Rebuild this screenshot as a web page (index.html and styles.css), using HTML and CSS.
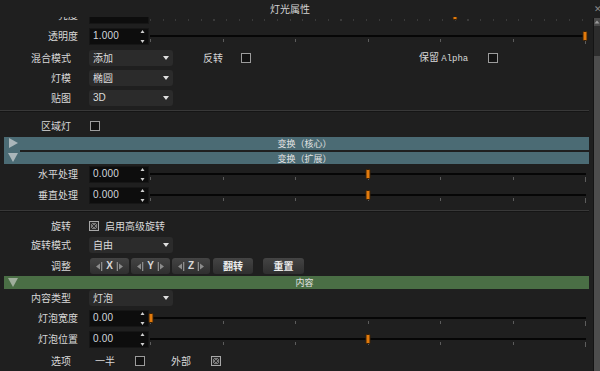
FILE: index.html
```html
<!DOCTYPE html>
<html lang="zh">
<head>
<meta charset="utf-8">
<title>灯光属性</title>
<link rel="stylesheet" href="styles.css">
</head>
<body>
<div class="win">
  <div class="titlebar">
    <span class="title">灯光属性</span>
    <span class="close">✕</span>
  </div>
  <div class="body">
    <div class="viewport">
      <div class="content">

        <div class="row">
          <span class="lbl s">亮度</span>
          <div class="num"><span class="val"></span></div>
          <div class="slider">
            <div class="track"></div>
            <div class="ticks fine"></div>
            <div class="thumb" style="left:69.5%"></div>
          </div>
        </div>

        <div class="row mt1">
          <span class="lbl s">透明度</span>
          <div class="num"><span class="val">1.000</span>
            <svg class="spin" width="5" height="17" viewBox="0 0 5 17"><polygon points="2.5,2 4.5,5 0.5,5" fill="#d0d0d0"/><polygon points="0.5,12 4.5,12 2.5,15" fill="#d0d0d0"/></svg>
          </div>
          <div class="slider">
            <div class="track"></div>
            <div class="ticks"><i></i><i></i><i></i><i></i><i></i><i></i><i class="end"></i></div>
            <div class="thumb" style="left:99.1%"></div>
          </div>
        </div>

        <div class="row mt2">
          <span class="lbl">混合模式</span>
          <div class="dd"><span>添加</span><svg width="6" height="4" viewBox="0 0 6 4"><polygon points="0,0 6,0 3,4" fill="#e0e0e0"/></svg></div>
          <span class="opt rev">反转</span>
          <span class="cb cb-rev"></span>
          <span class="opt keep">保留 <span class="mono">Alpha</span></span>
          <span class="cb cb-keep"></span>
        </div>

        <div class="row">
          <span class="lbl">灯模</span>
          <div class="dd"><span>椭圆</span><svg width="6" height="4" viewBox="0 0 6 4"><polygon points="0,0 6,0 3,4" fill="#e0e0e0"/></svg></div>
        </div>

        <div class="row">
          <span class="lbl">贴图</span>
          <div class="dd"><span class="latin">3D</span><svg width="6" height="4" viewBox="0 0 6 4"><polygon points="0,0 6,0 3,4" fill="#e0e0e0"/></svg></div>
        </div>

        <div class="sep mt2"></div>

        <div class="row mt4">
          <span class="lbl">区域灯</span>
          <span class="cb cb-area"></span>
        </div>

        <div class="bars teal mt1">
          <div class="handle">
            <svg width="10" height="10" viewBox="0 0 10 10"><polygon points="1,0 10,5 1,10" fill="#aab6ba"/></svg>
            <svg class="h2" width="10" height="9" viewBox="0 0 10 9"><polygon points="0,0 10,0 5,9" fill="#aab6ba"/></svg>
          </div>
          <div class="bar-col">
            <div class="bar b1">变换（核心）</div>
            <div class="bar-gap"></div>
            <div class="bar b2">变换（扩展）</div>
          </div>
        </div>

        <div class="row">
          <span class="lbl s">水平处理</span>
          <div class="num"><span class="val">0.000</span>
            <svg class="spin" width="5" height="17" viewBox="0 0 5 17"><polygon points="2.5,2 4.5,5 0.5,5" fill="#d0d0d0"/><polygon points="0.5,12 4.5,12 2.5,15" fill="#d0d0d0"/></svg>
          </div>
          <div class="slider">
            <div class="track"></div>
            <div class="ticks"><i></i><i></i><i></i><i></i><i></i><i></i><i class="end"></i></div>
            <div class="thumb" style="left:49.7%"></div>
          </div>
        </div>

        <div class="row mt1">
          <span class="lbl s">垂直处理</span>
          <div class="num"><span class="val">0.000</span>
            <svg class="spin" width="5" height="17" viewBox="0 0 5 17"><polygon points="2.5,2 4.5,5 0.5,5" fill="#d0d0d0"/><polygon points="0.5,12 4.5,12 2.5,15" fill="#d0d0d0"/></svg>
          </div>
          <div class="slider">
            <div class="track"></div>
            <div class="ticks"><i></i><i></i><i></i><i></i><i></i><i></i><i class="end"></i></div>
            <div class="thumb" style="left:49.7%"></div>
          </div>
        </div>

        <div class="sep mt5"></div>

        <div class="row short mt5">
          <span class="lbl">旋转</span>
          <svg class="cbx cbx-rot" width="10" height="10" viewBox="0 0 10 10"><rect x="0.5" y="0.5" width="9" height="9" fill="#2a2a2a" stroke="#a8a8a8"/><rect x="2" y="2" width="6" height="6" fill="#7a7a7a"/><path d="M2 2 L8 8 M8 2 L2 8" stroke="#2a2a2a" stroke-width="1"/></svg>
          <span class="opt adv">启用高级旋转</span>
        </div>

        <div class="row">
          <span class="lbl">旋转模式</span>
          <div class="dd"><span>自由</span><svg width="6" height="4" viewBox="0 0 6 4"><polygon points="0,0 6,0 3,4" fill="#e0e0e0"/></svg></div>
        </div>

        <div class="row mt1">
          <span class="lbl">调整</span>
          <div class="btns">
            <div class="btn axis">
              <svg width="8" height="9" viewBox="0 0 8 9"><polygon points="0,4.5 4,1.5 4,7.5" fill="#8c8c8c"/><rect x="5" y="0" width="1.3" height="9" fill="#8c8c8c"/></svg>
              <span class="ax">X</span>
              <svg width="8" height="9" viewBox="0 0 8 9"><rect x="1.7" y="0" width="1.3" height="9" fill="#8c8c8c"/><polygon points="8,4.5 4,1.5 4,7.5" fill="#8c8c8c"/></svg>
            </div>
            <div class="btn axis">
              <svg width="8" height="9" viewBox="0 0 8 9"><polygon points="0,4.5 4,1.5 4,7.5" fill="#8c8c8c"/><rect x="5" y="0" width="1.3" height="9" fill="#8c8c8c"/></svg>
              <span class="ax">Y</span>
              <svg width="8" height="9" viewBox="0 0 8 9"><rect x="1.7" y="0" width="1.3" height="9" fill="#8c8c8c"/><polygon points="8,4.5 4,1.5 4,7.5" fill="#8c8c8c"/></svg>
            </div>
            <div class="btn axis z">
              <svg width="8" height="9" viewBox="0 0 8 9"><polygon points="0,4.5 4,1.5 4,7.5" fill="#8c8c8c"/><rect x="5" y="0" width="1.3" height="9" fill="#8c8c8c"/></svg>
              <span class="ax">Z</span>
              <svg width="8" height="9" viewBox="0 0 8 9"><rect x="1.7" y="0" width="1.3" height="9" fill="#8c8c8c"/><polygon points="8,4.5 4,1.5 4,7.5" fill="#8c8c8c"/></svg>
            </div>
            <div class="btn flip">翻转</div>
            <div class="btn reset">重置</div>
          </div>
        </div>

        <div class="bars green">
          <div class="handle">
            <svg width="10" height="9" viewBox="0 0 10 9"><polygon points="0,0 10,0 5,9" fill="#9fae9c"/></svg>
          </div>
          <div class="bar-col">
            <div class="bar b1">内容</div>
          </div>
        </div>

        <div class="row short">
          <span class="lbl">内容类型</span>
          <div class="dd"><span>灯泡</span><svg width="6" height="4" viewBox="0 0 6 4"><polygon points="0,0 6,0 3,4" fill="#e0e0e0"/></svg></div>
        </div>

        <div class="row mt1">
          <span class="lbl s">灯泡宽度</span>
          <div class="num"><span class="val">0.00</span>
            <svg class="spin" width="5" height="17" viewBox="0 0 5 17"><polygon points="2.5,2 4.5,5 0.5,5" fill="#d0d0d0"/><polygon points="0.5,12 4.5,12 2.5,15" fill="#d0d0d0"/></svg>
          </div>
          <div class="slider">
            <div class="track"></div>
            <div class="ticks"><i></i><i></i><i></i><i></i><i></i><i></i><i class="end"></i></div>
            <div class="thumb" style="left:0.3%"></div>
          </div>
        </div>

        <div class="row mt1">
          <span class="lbl s">灯泡位置</span>
          <div class="num"><span class="val">0.00</span>
            <svg class="spin" width="5" height="17" viewBox="0 0 5 17"><polygon points="2.5,2 4.5,5 0.5,5" fill="#d0d0d0"/><polygon points="0.5,12 4.5,12 2.5,15" fill="#d0d0d0"/></svg>
          </div>
          <div class="slider">
            <div class="track"></div>
            <div class="ticks"><i></i><i></i><i></i><i></i><i></i><i></i><i class="end"></i></div>
            <div class="thumb" style="left:49.7%"></div>
          </div>
        </div>

        <div class="row mt2">
          <span class="lbl">选项</span>
          <span class="opt half">一半</span>
          <span class="cb cb-half"></span>
          <span class="opt ext">外部</span>
          <svg class="cbx cbx-ext" width="10" height="10" viewBox="0 0 10 10"><rect x="0.5" y="0.5" width="9" height="9" fill="#2a2a2a" stroke="#a8a8a8"/><rect x="2" y="2" width="6" height="6" fill="#7a7a7a"/><path d="M2 2 L8 8 M8 2 L2 8" stroke="#2a2a2a" stroke-width="1"/></svg>
        </div>

      </div>
    </div>
    <div class="scrollbar">
      <div class="sb-up"><svg width="6" height="8" viewBox="0 0 6 8"><polygon points="3,2.5 5.5,5.5 0.5,5.5" fill="#9a9a9a"/></svg></div>
      <div class="sb-track"></div>
      <div class="sb-thumb"></div>
    </div>
  </div>
</div>
</body>
</html>
```

FILE: styles.css
```css
* { box-sizing: border-box; }
html, body { margin: 0; padding: 0; background: #1f1f1f; }
body {
  width: 600px; height: 371px; overflow: hidden;
  font-family: "Noto Sans CJK SC", "Noto Sans", sans-serif;
  font-size: 10px; line-height: 12px; color: #d6d6d6;
}
.win { width: 600px; height: 371px; display: flex; flex-direction: column; background: #1f1f1f; }

.titlebar { height: 17px; flex: none; display: flex; align-items: center; }
.title { flex: 1; text-align: center; padding-right: 14px; color: #d4d4d4; font-size: 10px; padding-top: 1px; }
.close { width: 6px; overflow: hidden; color: #8a8a8a; font-size: 9px; white-space: nowrap; font-family: "DejaVu Sans", sans-serif; }

.body { flex: 1; display: flex; min-height: 0; }
.viewport { flex: 1; overflow: hidden; }
.content { margin-top: -12px; padding: 0 4px; }

.scrollbar { width: 7px; flex: none; margin-top: 1px; border-left: 1px solid #141414; background: #2d2d2d; display: flex; flex-direction: column; }
.sb-up { height: 8px; background: #4a4a4a; display: flex; justify-content: center; }
.sb-track { height: 30px; }
.sb-thumb { flex: 1; background: #4d4d4d; }

.row { display: flex; align-items: center; height: 20px; }
.row.short { height: 18px; }
.mt1 { margin-top: 1px; }
.mt2 { margin-top: 2px; }
.mt4 { margin-top: 4px; }
.mt5 { margin-top: 5px; }

.sep { height: 2px; margin-left: -4px; border-top: 1px solid #383838; background: #151515; }

.lbl { width: 85px; flex: none; text-align: right; padding-right: 18px; white-space: nowrap; color: #d8d8d8; }
.lbl.s { padding-right: 11px; }

.num { width: 60px; height: 17px; flex: none; background: #0d0d0d; border: 1px solid #161616; display: flex; align-items: center; justify-content: space-between; padding: 0 3px 0 3px; }
.val { font-family: "Liberation Sans", sans-serif; font-size: 10px; color: #d2d6dc; letter-spacing: 0.2px; }
.spin { display: block; }

.slider { flex: 1; position: relative; height: 20px; margin-left: 1px; padding-right: 3px; display: flex; flex-direction: column; justify-content: center; }
.track { height: 2px; background: #060606; }
.ticks { display: flex; justify-content: space-between; height: 3px; margin-top: 2px; margin-bottom: -5px; }
.ticks i { width: 1px; background: #5c5c5c; }
.ticks i.end { height: 5px; }
.ticks.fine { background: repeating-linear-gradient(90deg, #3a3a3a 0 1px, transparent 1px 12.7px); height: 2px; }
.thumb { position: absolute; top: 50%; width: 5px; height: 10px; transform: translate(-50%, -50%); background: #e27a0c; border: 1px solid #3a2208; border-radius: 1px; }

.dd { width: 84px; height: 16px; flex: none; background: #2b2b2b; border-radius: 3px; display: flex; align-items: center; justify-content: space-between; padding: 0 4px 0 4px; color: #dcdcdc; }
.dd svg { display: block; }
.latin { font-family: "Liberation Sans", sans-serif; }

.cb { width: 10px; height: 10px; flex: none; border: 1px solid #9c9c9c; background: #121212; }
.cbx { display: block; flex: none; }

.opt { white-space: nowrap; color: #d8d8d8; }
.rev { margin-left: 30px; }
.cb-rev { margin-left: 18px; }
.keep { margin-left: 168px; }
.mono { font-family: "Liberation Mono", monospace; font-size: 9px; }
.cb-keep { margin-left: 20px; }
.cb-area { margin-left: 1px; }
.adv { margin-left: 6px; }
.half { margin-left: 6px; }
.cb-half { margin-left: 20px; }
.ext { margin-left: 26px; }
.cbx-ext { margin-left: 20px; }

.bars { display: flex; color: #e2e2e2; font-size: 9px; line-height: 11px; }
.bars .handle { width: 16px; flex: none; display: flex; flex-direction: column; align-items: center; padding-top: 1px; padding-left: 2px; }
.bars.teal .handle { background: #4b6b74; }
.bars.green .handle { background: #4a6e45; padding-top: 2px; }
.handle .h2 { margin-top: 5px; }
.bar-col { flex: 1; display: flex; flex-direction: column; }
.bar { display: flex; align-items: center; justify-content: center; }
.teal .bar { background: #4b6b74; }
.teal .b1 { height: 13px; }
.teal .b2 { height: 12px; }
.bar-gap { height: 2px; background: #1f1f1f; }
.green .bar { background: #4a6e45; height: 13px; }

.btns { display: flex; margin-left: 1px; }
.btn { height: 16px; border-radius: 3px; background: linear-gradient(#444444, #2f2f2f); color: #ececec; font-weight: bold; display: flex; align-items: center; justify-content: center; }
.btn.axis { width: 39px; margin-right: 2px; gap: 2px; }
.btn.axis.z { width: 38px; margin-right: 3px; }
.ax { font-family: "Liberation Sans", sans-serif; font-weight: bold; font-size: 10px; color: #d8d8d8; }
.btn.flip { width: 40px; }
.btn.reset { width: 41px; margin-left: 10px; }
```
